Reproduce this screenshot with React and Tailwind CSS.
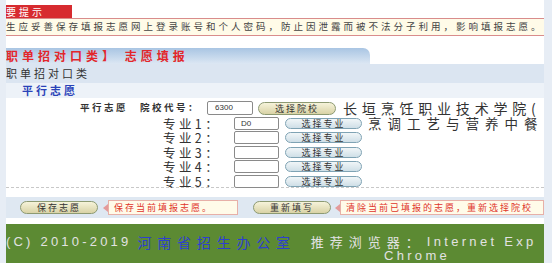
import React from 'react';

const cjk = { fontFamily: '"Noto Sans CJK SC", "Liberation Sans", sans-serif' };
const latin = { fontFamily: '"Liberation Sans", "Noto Sans CJK SC", sans-serif' };

function OvalButton({ label, tone = 'sand', className = '' }) {
    const tones = {
        sand: 'bg-gradient-to-b from-[#f6f3da] to-[#d9d3a6] border-[#8d9a72]',
        sky: 'bg-gradient-to-b from-[#f1f6f8] to-[#cfdfe7] border-[#7fa3b4]',
    };
    return (
        <button
            className={`flex items-center justify-center rounded-full border text-[9px] leading-none tracking-[2px] text-[#333] ${tones[tone]} ${className}`}
        >
            {label}
        </button>
    );
}

function Callout({ text, className = '' }) {
    return (
        <div className={`flex items-center ${className}`}>
            <div className="w-0 h-0 border-y-[4px] border-y-transparent border-r-[5px] border-r-[#e49a9a]" />
            <div className="flex-1 h-[15px] flex items-center pl-[5px] bg-[#fffbe9] border border-[#e7b0a8] text-[9px] leading-none tracking-[2px] text-[#e0352b] whitespace-nowrap overflow-hidden">
                {text}
            </div>
        </div>
    );
}

function MajorRow({ n, value, name }) {
    return (
        <div className="flex items-center h-[14.5px] shrink-0 overflow-visible">
            <div className="w-[157px] shrink-0" />
            <span className="w-[71px] h-[13px] shrink-0 text-[12.5px] leading-[13px] tracking-[3.4px] text-[#333] whitespace-nowrap">专业{n}：</span>
            <div className="w-[45px] h-[13px] shrink-0 rounded-[2px] border border-[#8a8a8a] bg-white text-[8px] leading-[11px] pl-[6px] text-[#333]" style={latin}>
                {value}
            </div>
            <OvalButton label="选择专业" tone="sky" className="ml-[6px] w-[77px] h-[11px] shrink-0" />
            {name && (
                <span className="ml-[6px] h-[13px] text-[13.5px] leading-[13px] tracking-[6px] text-[#333] whitespace-nowrap">{name}</span>
            )}
        </div>
    );
}

export default function App() {
    return (
        <div className="w-[552px] h-[263px] overflow-hidden flex bg-white" style={cjk}>
            <div className="w-[6px] shrink-0 bg-[#e7edf5]" />
            <div className="flex-1 min-w-0 flex flex-col overflow-hidden">
                {/* notice */}
                <div className="pt-[5px]">
                    <div className="w-[66px] h-[13px] bg-[#d72b2f] text-white text-[10px] leading-[13px] tracking-[3px] whitespace-nowrap">
                        要提示
                    </div>
                </div>
                <div className="h-[18px] flex items-center border-y border-[#d98c8c] bg-[#fffbe8] text-[9.5px] leading-none tracking-[3px] text-[#444] whitespace-nowrap overflow-hidden">
                    生应妥善保存填报志愿网上登录账号和个人密码，防止因泄露而被不法分子利用，影响填报志愿。
                </div>
                <div className="h-[12px]" />

                {/* title tab */}
                <div className="flex h-[16px]">
                    <div className="w-[364px] rounded-tr-[7px] bg-gradient-to-b from-[#a9c5e3] to-[#dce7f3] flex items-center text-[12px] font-bold leading-none tracking-[4px] text-[#e3262a] whitespace-nowrap">
                        职单招对口类】 志愿填报
                    </div>
                </div>
                <div className="h-[19px] flex items-center bg-[#dbe5f1] text-[11px] leading-none tracking-[3px] text-[#333]">
                    职单招对口类
                </div>
                <div className="h-[15px] flex items-center pl-[16px] bg-[#edf2f8] text-[11px] font-bold leading-none tracking-[3px] text-[#2a43b8]">
                    平行志愿
                </div>

                {/* form */}
                <div className="h-[90px] flex flex-col pt-[2px] border-b border-dashed border-[#c8c8c8]">
                    <div className="flex items-center h-[16px] shrink-0">
                        <span className="ml-[74px] text-[9.5px] font-bold leading-none tracking-[2.5px] text-[#333]">平行志愿</span>
                        <span className="ml-[12px] text-[9.5px] font-bold leading-none tracking-[2.5px] text-[#333]">院校代号：</span>
                        <div className="ml-[7px] w-[46px] h-[14px] rounded-[2px] border border-[#8a8a8a] bg-white text-[8px] leading-[12px] pl-[7px] text-[#333]" style={latin}>
                            6300
                        </div>
                        <OvalButton label="选择院校" className="ml-[5px] w-[78px] h-[13px]" />
                        <span className="ml-[7px] h-[14px] text-[14px] leading-[14px] tracking-[4.8px] text-[#333] whitespace-nowrap">长垣烹饪职业技术学院(</span>
                    </div>
                    <MajorRow n="1" value="D0" name="烹调工艺与营养中餐" />
                    <MajorRow n="2" />
                    <MajorRow n="3" />
                    <MajorRow n="4" />
                    <MajorRow n="5" />
                </div>

                <div className="h-[9px]" />
                {/* actions */}
                <div className="h-[21px] flex items-center bg-[#dfe8f2] whitespace-nowrap">
                    <OvalButton label="保存志愿" className="ml-[14px] w-[78px] h-[13px]" />
                    <Callout text="保存当前填报志愿。" className="ml-[5px] w-[135px]" />
                    <OvalButton label="重新填写" className="ml-[15px] w-[78px] h-[13px]" />
                    <Callout text="清除当前已填报的志愿，重新选择院校" className="ml-[4px] flex-1" />
                </div>
                <div className="h-[6px]" />

                {/* footer */}
                <div className="flex-1 bg-[#5c8a33] flex flex-col pt-[10px] whitespace-nowrap overflow-hidden">
                    <div className="flex items-center h-[16px] text-[13px] leading-none">
                        <span className="tracking-[3.2px] text-[#e2e2e2]" style={latin}>(C) 2010-2019</span>
                        <span className="ml-[6px] text-[14px] tracking-[5.8px] text-[#2d3fd0]">河南省招生办公室</span>
                        <span className="ml-[15px] text-[13px] tracking-[6px] text-[#e2e2e2]">推荐浏览器：</span>
                        <span className="ml-[2px] tracking-[3.3px] text-[#e2e2e2]" style={latin}>Internet Exp</span>
                    </div>
                    <div className="pl-[378px] h-[14px] text-[13px] leading-[14px] tracking-[3.3px] text-[#e2e2e2]" style={latin}>
                        Chrome
                    </div>
                </div>
            </div>
            <div className="w-[8px] shrink-0 bg-[#e7edf5]" />
        </div>
    );
}
